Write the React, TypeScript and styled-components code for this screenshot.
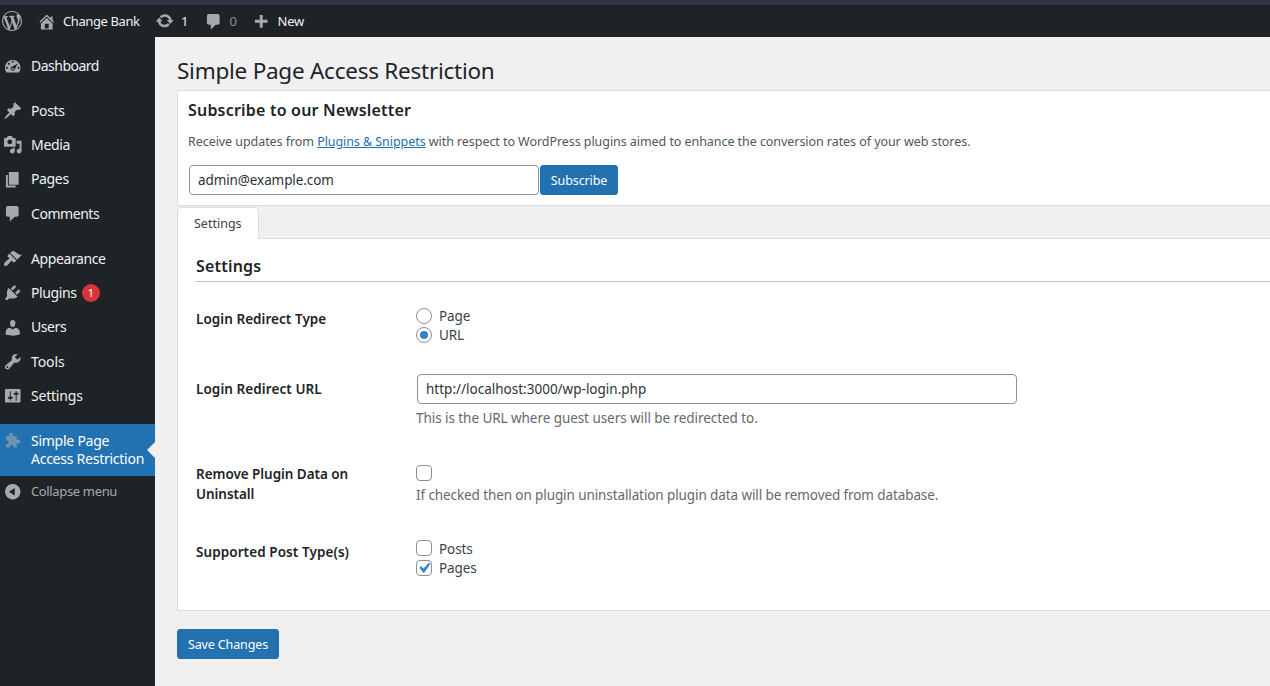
import React from "react";
import styled, { createGlobalStyle, css } from "styled-components";

const GlobalStyle = createGlobalStyle`
  *, *::before, *::after { box-sizing: border-box; }
  html, body { margin: 0; padding: 0; height: 100%; overflow: hidden; }
  body {
    background: #f0f0f1;
    color: #3c434a;
    font-family: "Noto Sans", "Open Sans", sans-serif;
    font-size: 13px;
    line-height: 20px;
  }
  h1, h2, p { margin: 0; }
`;

/* Icon outlines, all on a 20 x 20 grid */
const icons = {
  wordpress:
    "M20 10c0-5.51-4.49-10-10-10C4.48 0 0 4.49 0 10c0 5.52 4.48 10 10 10 5.51 0 10-4.48 10-10zM7.78 15.37L4.37 6.22c.55-.02 1.17-.08 1.17-.08.5-.06.44-1.13-.06-1.11 0 0-1.45.11-2.37.11-.18 0-.37 0-.58-.01C4.12 2.69 6.87 1.11 10 1.11c2.33 0 4.45.87 6.05 2.34-.68-.11-1.65.39-1.65 1.58 0 .74.45 1.36.9 2.1.35.61.55 1.36.55 2.46 0 1.49-1.4 5-1.4 5l-3.03-8.37c.54-.02.82-.17.82-.17.5-.05.44-1.25-.06-1.22 0 0-1.44.12-2.38.12-.87 0-2.33-.12-2.33-.12-.5-.03-.56 1.2-.06 1.22l.92.08 1.26 3.41zM17.41 10c.24-.64.74-1.87.43-4.25.7 1.29 1.05 2.71 1.05 4.25 0 3.29-1.73 6.24-4.4 7.78.97-2.59 1.94-5.2 2.92-7.78zM6.1 18.09C3.12 16.65 1.11 13.53 1.11 10c0-1.3.23-2.48.72-3.59C3.25 10.3 4.67 14.2 6.1 18.09zm4.03-6.63l2.58 6.98c-.86.29-1.76.45-2.71.45-.79 0-1.57-.11-2.29-.33.81-2.38 1.62-4.74 2.42-7.1z",
  home: "M16 8.5l1.53 1.53-1.06 1.06L10 4.6l-6.47 6.49-1.06-1.06L10 2.5l4 4v-2h2v4zm-6-2.46l6 5.99V18H4v-5.97zM12 17v-5H8v5h4z",
  update:
    "M10.2 3.28c3.53 0 6.43 2.61 6.92 6h2.08l-3.5 4-3.5-4h2.32c-.45-1.97-2.21-3.45-4.32-3.45-1.45 0-2.73.71-3.54 1.78L4.95 5.66C6.23 4.2 8.11 3.28 10.2 3.28zm-.4 13.44c-3.52 0-6.43-2.61-6.92-6H.8l3.5-4c1.17 1.33 2.33 2.67 3.5 4H5.48c.45 1.97 2.21 3.45 4.32 3.45 1.45 0 2.73-.71 3.54-1.78l1.71 1.95c-1.28 1.46-3.15 2.38-5.25 2.38z",
  comments:
    "M5 2h9c1.1 0 2 .9 2 2v7c0 1.1-.9 2-2 2h-2l-5 5v-5H5c-1.1 0-2-.9-2-2V4c0-1.1.9-2 2-2z",
  plus: "M17 7v3h-5v5H9v-5H4V7h5V2h3v5h5z",
  dashboard:
    "M3.76 17h12.48c1.1-1.38 1.76-3.11 1.76-5 0-4.42-3.58-8-8-8s-8 3.58-8 8c0 1.89.66 3.62 1.76 5zM9 6c0-.55.45-1 1-1s1 .45 1 1c0 .56-.45 1-1 1s-1-.44-1-1zM5 8c0-.55.45-1 1-1s1 .45 1 1c0 .56-.45 1-1 1s-1-.44-1-1zm3.52 3.4c.84-.83 6.51-3.5 6.51-3.5s-2.66 5.68-3.49 6.51c-.84.84-2.18.84-3.02 0-.83-.83-.83-2.18 0-3.01zM3 12c0-.55.45-1 1-1s1 .45 1 1c0 .56-.45 1-1 1s-1-.44-1-1zm6 1c0-.55.45-1 1-1s1 .45 1 1c0 .56-.45 1-1 1s-1-.44-1-1zm6-1c0-.55.45-1 1-1s1 .45 1 1c0 .56-.45 1-1 1s-1-.44-1-1z",
  posts:
    "M10.44 3.02l1.82-1.82 6.36 6.35-1.83 1.82c-1.05-.68-2.48-.57-3.41.36l-.75.75c-.92.93-1.04 2.35-.35 3.41l-1.83 1.82-2.41-2.41-2.8 2.79c-.42.42-3.38 2.71-3.8 2.29s1.86-3.39 2.28-3.81l2.79-2.79L4.1 9.36l1.83-1.82c1.05.69 2.48.57 3.4-.36l.75-.75c.93-.92 1.05-2.35.36-3.41z",
  media:
    "M13 11V4c0-.55-.45-1-1-1h-1.67L9 1H5L3.67 3H2c-.55 0-1 .45-1 1v7c0 .55.45 1 1 1h10c.55 0 1-.45 1-1zM7 4.5c1.38 0 2.5 1.12 2.5 2.5S8.38 9.5 7 9.5 4.5 8.38 4.5 7 5.62 4.5 7 4.5zM14 6h5v10.5c0 1.38-1.12 2.5-2.5 2.5S14 17.88 14 16.5s1.12-2.5 2.5-2.5c.17 0 .34.02.5.05V9h-3V6zm-4 8.05V13h2v3.5c0 1.38-1.12 2.5-2.5 2.5S7 17.88 7 16.5 8.12 14 9.5 14c.17 0 .34.02.5.05z",
  pages: "M6 15V2h10v13H6zm-1 1h8v2H3V5h2v11z",
  appearance:
    "M14.48 11.06L7.41 3.99l1.5-1.5c.5-.56 2.3-.47 3.51.32 1.21.8 1.43 1.28 2.91 2.1 1.18.64 2.45 1.26 4.45.85zm-.71.71L6.7 4.7 4.93 6.47c-.39.39-.39 1.02 0 1.41l1.06 1.06c.39.39.39 1.03 0 1.42-.6.6-1.43 1.11-2.21 1.69-.35.26-.7.53-1.01.84C1.43 14.23.4 16.08 1.4 17.07c.99 1 2.84-.03 4.18-1.36.31-.31.58-.66.85-1.02.57-.78 1.08-1.61 1.69-2.21.39-.39 1.02-.39 1.41 0l1.06 1.06c.39.39 1.02.39 1.41 0z",
  plugins:
    "M13.11 4.36L9.87 7.6 8 5.73l3.24-3.24c.35-.34 1.05-.2 1.56.32.52.51.66 1.21.31 1.55zm-8 1.77l.91-1.12 9.01 9.01-1.19.84c-.71.71-2.63 1.16-3.82 1.16H6.14L4.9 17.26c-.59.59-1.54.59-2.12 0-.59-.58-.59-1.53 0-2.12l1.24-1.24v-3.88c0-1.13.4-3.19 1.09-3.89zm7.26 3.97l3.24-3.24c.34-.35 1.04-.21 1.55.31.52.51.66 1.21.31 1.55l-3.24 3.25z",
  users:
    "M10 9.25c-2.27 0-2.73-3.44-2.73-3.44C7 4.02 7.82 2 9.97 2c2.16 0 2.98 2.02 2.71 3.81 0 0-.41 3.44-2.68 3.44zm0 2.57L12.72 10c2.39 0 4.52 2.33 4.52 4.53v2.49s-3.65 1.13-7.24 1.13c-3.65 0-7.24-1.13-7.24-1.13v-2.49c0-2.25 1.94-4.48 4.47-4.48z",
  tools:
    "M16.68 9.77c-1.34 1.34-3.3 1.67-4.95.99l-5.41 6.52c-.99.99-2.59.99-3.58 0s-.99-2.59 0-3.57l6.52-5.42c-.68-1.65-.35-3.61.99-4.95 1.28-1.28 3.12-1.62 4.72-1.06l-2.89 2.89 2.82 2.82 2.86-2.87c.53 1.58.18 3.39-1.08 4.65zM3.81 16.21c.4.39 1.04.39 1.43 0 .4-.4.4-1.04 0-1.43-.39-.4-1.03-.4-1.43 0-.39.39-.39 1.03 0 1.43z",
  settings:
    "M18 16V4c0-.55-.45-1-1-1H3c-.55 0-1 .45-1 1v12c0 .55.45 1 1 1h14c.55 0 1-.45 1-1zM8 11h1c.55 0 1 .45 1 1s-.45 1-1 1H8v1.5c0 .28-.22.5-.5.5s-.5-.22-.5-.5V13H6c-.55 0-1-.45-1-1s.45-1 1-1h1V5.5c0-.28.22-.5.5-.5s.5.22.5.5V11zm5-2h-1c-.55 0-1-.45-1-1s.45-1 1-1h1V5.5c0-.28.22-.5.5-.5s.5.22.5.5V7h1c.55 0 1 .45 1 1s-.45 1-1 1h-1v5.5c0 .28-.22.5-.5.5s-.5-.22-.5-.5V9z",
  puzzle:
    "M3 5.500h3.600C5.600 4.200 6.200 2 8.200 2S10.800 4.200 9.800 5.500H14v3.800c1.200-1 3.800-.4 3.800 1.500s-2.600 2.500-3.800 1.500V17h-3.600c.7-1.300.3-2.700-1.400-2.700S6.900 15.700 7.600 17H3v-4c1.300.8 2.700.3 2.700-1.500S4.300 9.200 3 10z",
  collapse:
    "M10 2.16c4.33 0 7.84 3.51 7.84 7.84s-3.51 7.84-7.84 7.84S2.16 14.33 2.16 10 5.71 2.16 10 2.16zm2 11.72V6.12L6.18 9.97z",
};

type IconName = keyof typeof icons;

const IconSvg = styled.svg<{ $size: number }>`
  width: ${(p) => p.$size}px;
  height: ${(p) => p.$size}px;
  flex: none;
  fill: currentColor;
  fill-rule: evenodd;
`;

const Icon = ({ name, size = 19.5 }: { name: IconName; size?: number }) => (
  <IconSvg $size={size} viewBox="0 0 20 20" aria-hidden="true">
    <path d={icons[name]} />
  </IconSvg>
);

const Page = styled.div`
  display: flex;
  flex-direction: column;
  width: 100vw;
  height: 100vh;
`;

const WindowEdge = styled.div`
  flex: none;
  height: 5px;
  background: #323445;
`;

const AdminBar = styled.header`
  flex: none;
  display: flex;
  align-items: center;
  height: 32px;
  padding-left: 2px;
  background: #1d2327;
  color: #f0f0f1;
  line-height: 32px;
`;

const BarItem = styled.div<{ $before?: number; $drop?: number; $muted?: boolean; $spacing?: number }>`
  display: flex;
  align-items: center;
  gap: 6.5px;
  margin-left: ${(p) => p.$before ?? 0}px;
  letter-spacing: ${(p) => p.$spacing ?? 0}px;

  svg {
    margin-top: ${(p) => p.$drop ?? 0}px;
    color: #a7aaad;
  }
  span { color: ${(p) => (p.$muted ? "#8c9196" : "#f0f0f1")}; }
`;

const Body = styled.div`
  flex: 1;
  display: flex;
  min-height: 0;
`;

const Sidebar = styled.nav`
  flex: none;
  display: flex;
  flex-direction: column;
  gap: 10.5px;
  width: 155px;
  padding-top: 11.7px;
  background: #1d2327;
  font-size: 14px;
`;

const MenuGroup = styled.div`
  display: flex;
  flex-direction: column;
`;

const MenuItem = styled.a<{ $spacing?: number }>`
  display: flex;
  align-items: center;
  height: 34.35px;
  padding-left: 3.3px;
  gap: 8.2px;
  color: #f0f0f1;
  letter-spacing: ${(p) => p.$spacing ?? -0.3}px;

  svg { color: #a7aaad; }
`;

const CurrentItem = styled(MenuItem)`
  position: relative;
  align-items: flex-start;
  height: 52px;
  padding-top: 8px;
  background: #2271b1;
  color: #fff;
  line-height: 18px;
  white-space: nowrap;

  svg { margin-top: -1px; opacity: 0.6; }

  &::after {
    content: "";
    position: absolute;
    right: 0;
    top: 18px;
    border: 8px solid transparent;
    border-left-width: 0;
    border-right-color: #f0f0f1;
  }
`;

const CollapseItem = styled(MenuItem)`
  font-size: 13px;
  height: 31px;
  color: #a7aaad;

  svg { margin-top: 2px; }
`;

const CountBadge = styled.span`
  width: 18px;
  height: 18px;
  margin: 1px 0 0 -3px;
  border-radius: 50%;
  background: #d63638;
  color: #fff;
  font-size: 11px;
  line-height: 18px;
  text-align: center;
`;

const Main = styled.main`
  flex: 1;
  min-width: 0;
  display: flex;
  flex-direction: column;
  align-items: stretch;
  padding: 20px 0 0 22px;
  white-space: nowrap;
`;

const PageTitle = styled.h1`
  height: 33px;
  color: #1d2327;
  font-size: 22.5px;
  font-weight: 400;
  line-height: 28px;
  letter-spacing: -0.25px;
`;

const Newsletter = styled.section`
  height: 116px;
  padding: 8px 0 0 10px;
  border: 1px solid #dcdcde;
  border-right: 0;
  background: #fff;
`;

const SectionTitle = styled.h2`
  color: #1d2327;
  font-size: 16px;
  font-weight: 600;
  line-height: 22px;
  letter-spacing: 0.2px;
`;

const Intro = styled.p`
  margin-top: 11px;
  color: #50575e;
  font-size: 12.5px;
  line-height: 20px;
  letter-spacing: -0.06px;
`;

const Link = styled.a`
  color: #2271b1;
  text-decoration: underline;
  text-underline-offset: 1px;
`;

const SubscribeRow = styled.div`
  display: flex;
  gap: 1px;
  margin: 13px 0 0 1px;
`;

const TextInput = styled.input<{ $width: number; $spacing?: number }>`
  width: ${(p) => p.$width}px;
  height: 30px;
  padding: 0 8px;
  border: 1px solid #8c8f94;
  border-radius: 4px;
  background: #fff;
  color: #2c3338;
  font: inherit;
  font-size: 13.5px;
  letter-spacing: ${(p) => p.$spacing ?? 0}px;
  outline: none;
`;

const UrlInput = styled(TextInput)`
  display: block;
  margin-left: 1px;
`;

const Button = styled.button<{ $width: number }>`
  width: ${(p) => p.$width}px;
  height: 30px;
  padding: 1px 0 0;
  border: 1px solid #2271b1;
  border-radius: 3px;
  background: #2271b1;
  color: #fff;
  font: inherit;
  font-size: 12.5px;
  letter-spacing: -0.12px;
`;

const Tabs = styled.div`
  display: flex;
  height: 32px;
  margin-top: 1px;
`;

const Tab = styled.div`
  position: relative;
  z-index: 1;
  width: 82px;
  height: 32px;
  padding-left: 16px;
  border: 1px solid #dcdcde;
  border-bottom: 0;
  border-radius: 4px 4px 0 0;
  background: #fff;
  color: #3c434a;
  font-size: 12.5px;
  line-height: 31px;
`;

const Panel = styled.section`
  height: 373px;
  margin-top: -1px;
  padding: 16px 0 0 18px;
  border: 1px solid #dcdcde;
  border-right: 0;
  background: #fff;
`;

const PanelTitle = styled(SectionTitle)`
  height: 27px;
  border-bottom: 1px solid #c3c4c7;
`;

const Field = styled.div<{ $height: number; $top: number }>`
  display: grid;
  grid-template-columns: 220px 1fr;
  height: ${(p) => p.$height}px;
  padding-top: ${(p) => p.$top}px;
`;

const FieldLabel = styled.div<{ $spacing?: number }>`
  color: #1d2327;
  font-size: 13.5px;
  font-weight: 600;
  line-height: 20px;
  letter-spacing: ${(p) => p.$spacing ?? 0.05}px;
`;

const FieldBody = styled.div<{ $lift?: number }>`
  margin-top: ${(p) => -(p.$lift ?? 0)}px;
  font-size: 13.5px;
`;

const Option = styled.label`
  display: flex;
  align-items: center;
  gap: 7px;
  height: 19.5px;
  letter-spacing: -0.1px;
`;

const mark = css`
  flex: none;
  display: grid;
  place-items: center;
  width: 16px;
  height: 16px;
  border: 1px solid #8c8f94;
  background: #fff;
`;

const Radio = styled.span`
  ${mark}
  border-radius: 50%;
`;

const RadioDot = styled.span`
  width: 8px;
  height: 8px;
  border-radius: 50%;
  background: #3582c4;
`;

const Checkbox = styled.span`
  ${mark}
  margin-top: -1px;
  border-radius: 4px;

  svg {
    width: 20px;
    height: 20px;
    margin: -3px;
    fill: #3582c4;
    stroke: #3582c4;
    stroke-width: 0.5px;
  }
`;

const Help = styled.p<{ $top: number; $spacing?: number }>`
  margin-top: ${(p) => p.$top}px;
  color: #646970;
  font-size: 13.5px;
  line-height: 20px;
  letter-spacing: ${(p) => p.$spacing ?? -0.1}px;
`;

const Actions = styled.div`
  padding-top: 18px;
`;

const App = () => (
  <>
    <GlobalStyle />
    <Page>
      <WindowEdge />
      <AdminBar>
        <BarItem>
          <Icon name="wordpress" size={20} />
        </BarItem>
        <BarItem $before={15} $drop={1} $spacing={-0.4}>
          <Icon name="home" />
          <span>Change Bank</span>
        </BarItem>
        <BarItem $before={15.5}>
          <Icon name="update" />
          <span>1</span>
        </BarItem>
        <BarItem $before={15} $drop={2} $muted>
          <Icon name="comments" />
          <span>0</span>
        </BarItem>
        <BarItem $before={14.5} $drop={3} $spacing={-0.2}>
          <Icon name="plus" />
          <span>New</span>
        </BarItem>
      </AdminBar>
      <Body>
        <Sidebar>
          <MenuGroup>
            <MenuItem $spacing={-0.5}><Icon name="dashboard" />Dashboard</MenuItem>
          </MenuGroup>
          <MenuGroup>
            <MenuItem $spacing={-0.35}><Icon name="posts" />Posts</MenuItem>
            <MenuItem><Icon name="media" />Media</MenuItem>
            <MenuItem $spacing={-0.35}><Icon name="pages" />Pages</MenuItem>
            <MenuItem $spacing={-0.45}><Icon name="comments" />Comments</MenuItem>
          </MenuGroup>
          <MenuGroup>
            <MenuItem $spacing={-0.4}><Icon name="appearance" />Appearance</MenuItem>
            <MenuItem $spacing={-0.4}><Icon name="plugins" />Plugins<CountBadge>1</CountBadge></MenuItem>
            <MenuItem $spacing={-0.4}><Icon name="users" />Users</MenuItem>
            <MenuItem $spacing={-0.1}><Icon name="tools" />Tools</MenuItem>
            <MenuItem $spacing={-0.2}><Icon name="settings" />Settings</MenuItem>
          </MenuGroup>
          <MenuGroup>
            <CurrentItem $spacing={-0.25}>
              <Icon name="puzzle" />
              <span>Simple Page<br />Access Restriction</span>
            </CurrentItem>
            <CollapseItem $spacing={-0.35}><Icon name="collapse" />Collapse menu</CollapseItem>
          </MenuGroup>
        </Sidebar>
        <Main>
          <PageTitle>Simple Page Access Restriction</PageTitle>
          <Newsletter>
            <SectionTitle>Subscribe to our Newsletter</SectionTitle>
            <Intro>
              Receive updates from <Link>Plugins &amp; Snippets</Link> with respect to WordPress plugins aimed to enhance the conversion rates of your web stores.
            </Intro>
            <SubscribeRow>
              <TextInput $width={350} $spacing={-0.1} defaultValue="admin@example.com" />
              <Button $width={78}>Subscribe</Button>
            </SubscribeRow>
          </Newsletter>
          <Tabs>
            <Tab>Settings</Tab>
          </Tabs>
          <Panel>
            <PanelTitle>Settings</PanelTitle>
            <Field $height={74} $top={27}>
              <FieldLabel>Login Redirect Type</FieldLabel>
              <FieldBody $lift={3}>
                <Option><Radio />Page</Option>
                <Option><Radio><RadioDot /></Radio>URL</Option>
              </FieldBody>
            </Field>
            <Field $height={85} $top={23}>
              <FieldLabel $spacing={0.08}>Login Redirect URL</FieldLabel>
              <FieldBody $lift={5}>
                <UrlInput $width={600} defaultValue="http://localhost:3000/wp-login.php" />
                <Help $top={4} $spacing={-0.06}>This is the URL where guest users will be redirected to.</Help>
              </FieldBody>
            </Field>
            <Field $height={78} $top={23}>
              <FieldLabel $spacing={-0.05}>Remove Plugin Data on<br />Uninstall</FieldLabel>
              <FieldBody>
                <Option><Checkbox /></Option>
                <Help $top={1.5}>If checked then on plugin uninstallation plugin data will be removed from database.</Help>
              </FieldBody>
            </Field>
            <Field $height={80} $top={23}>
              <FieldLabel $spacing={0.08}>Supported Post Type(s)</FieldLabel>
              <FieldBody $lift={3}>
                <Option><Checkbox />Posts</Option>
                <Option>
                  <Checkbox>
                    <svg viewBox="0 0 20 20"><path d="M14.83 4.89l1.34.94-5.81 8.38H9.02L5.78 9.67l1.34-1.25 2.57 2.4z" /></svg>
                  </Checkbox>
                  Pages
                </Option>
              </FieldBody>
            </Field>
          </Panel>
          <Actions>
            <Button $width={102}>Save Changes</Button>
          </Actions>
        </Main>
      </Body>
    </Page>
  </>
);

export default App;
